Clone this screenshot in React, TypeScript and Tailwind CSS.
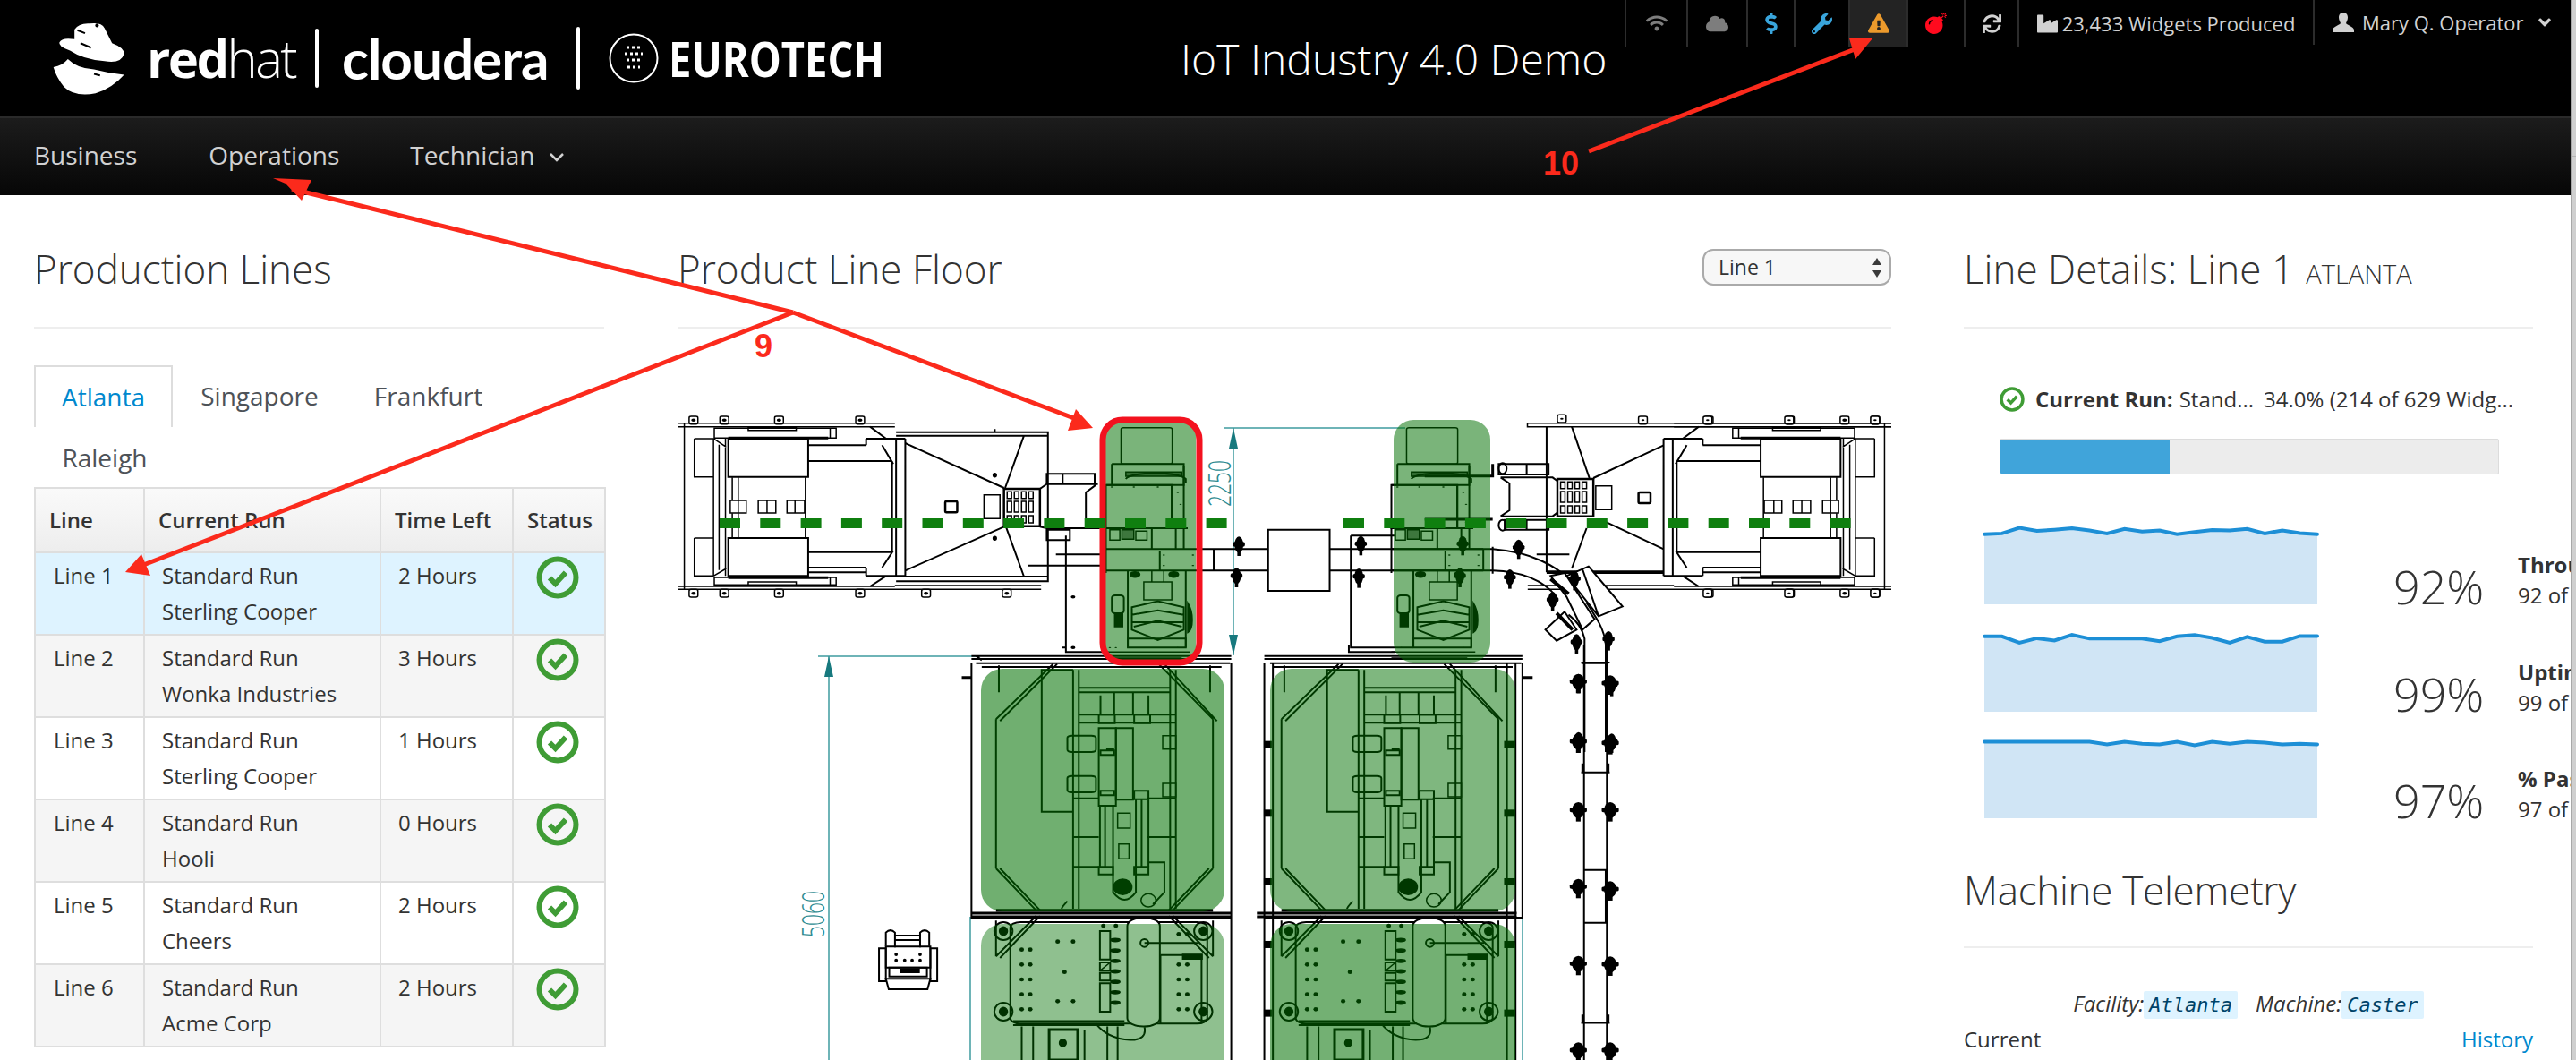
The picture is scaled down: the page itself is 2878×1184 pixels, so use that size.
import React from 'react';
import { FaWifi, FaCloud, FaDollarSign, FaWrench, FaExclamationTriangle, FaBomb, FaSync, FaIndustry, FaAngleDown } from 'react-icons/fa';

const Z4 = 'translate(740 440) scale(0.4464 0.3333)';
const Z5 = 'translate(1440 440) scale(0.4464 0.3333)';
const Z6 = 'translate(880 720) scale(0.6378 0.3333)';

function StatusIcon({ size = 48 }: { size?: number }) {
  return (
    <svg width={size} height={size} viewBox="0 0 48 48" className="block">
      <circle cx="24" cy="24" r="20.5" fill="none" stroke="#3f9c35" strokeWidth="6" />
      <path d="M15 24.5l6.5 6.5L33 18.5" fill="none" stroke="#3f9c35" strokeWidth="6" />
    </svg>
  );
}

function Tab({ x, y }: { x: number; y: number }) {
  return (
    <g>
      <rect x={x - 11} y={y} width="22" height="26" rx="5" fill="#fff" stroke="#000" strokeWidth="1.5" />
      <ellipse cx={x} cy={y + 13} rx="4" ry="3" fill="#000" />
    </g>
  );
}

function BackUnit() {
  return (
    <g fill="none" stroke="#000" strokeWidth="1.5">
      <path d="M36 98H582M36 110H582M36 645H582M36 655H948M582 642H948M55 98V655" />
      <path d="M80 150H128M80 150V278H128M80 483H128M80 483V610H128M128 150V610M142 170V590M158 150V610M128 150L160 178M128 610L160 585" />
      <path d="M130 115H435V148H130ZM130 615H435V640H130ZM215 112H335V122H215ZM215 630H335V640H215ZM420 115V148M420 615V640" />
      <path d="M165 148H415M165 616H415" strokeWidth="3" />
      <rect x="165" y="152" width="200" height="126" strokeWidth="2" />
      <rect x="165" y="483" width="200" height="127" strokeWidth="2" />
      <path d="M175 280V357M190 280V357M175 400V483M190 400V483M358 280V483" />
      <rect x="170" y="357" width="40" height="42" />
      <path d="M190 357V399" />
      <rect x="240" y="357" width="44" height="42" />
      <path d="M262 357V399" />
      <rect x="312" y="357" width="44" height="42" />
      <path d="M332 357V399" />
      <path d="M365 225H575M365 172H510M365 530H575M365 582H510M575 225V530M585 150V610M608 150V610M510 150H608M510 610H608M550 172L578 235M550 582L578 525M365 598H510M510 150V172M510 582V610M520 110L560 150M520 645L560 610" strokeWidth="2" />
      {[78, 155, 292, 495].map((x) => <Tab key={x} x={x} y={75} />)}
      {[78, 155, 292, 495].map((x) => <Tab key={x} x={x} y={655} />)}
    </g>
  );
}

function Grid({ x, y }: { x: number; y: number }) {
  const xs = [8, 26, 44, 62];
  return (
    <g transform={`translate(${x} ${y})`} fill="none" stroke="#000" strokeWidth="1.5">
      <rect x="0" y="0" width="90" height="125" strokeWidth="2.5" />
      {xs.map((c) => (
        <g key={c}>
          <rect x={c} y="10" width="11" height="22" />
          <rect x={c} y="42" width="11" height="36" />
          <rect x={c} y="90" width="11" height="24" />
        </g>
      ))}
    </g>
  );
}

function Fastener({ x, y }: { x: number; y: number }) {
  return (
    <g fill="#000">
      <ellipse cx={x} cy={y} rx="11" ry="27" />
      <rect x={x - 15} y={y - 9} width="30" height="16" rx="5" />
      <rect x={x - 4} y={y + 20} width="8" height="18" />
    </g>
  );
}

function Caster() {
  const dots = [[1125, 312], [1180, 312], [1240, 312], [1290, 330], [1297, 370], [1297, 430], [1120, 850], [1135, 850], [1290, 850], [1255, 540], [1255, 575], [1328, 540], [1328, 575]];
  return (
    <g fill="none" stroke="#000" strokeWidth="1.5">
      <rect x="1148" y="113" width="128" height="122" rx="6" />
      <path d="M1125 235H1305V305H1110M1125 235V305M1160 285C1170 260 1290 258 1310 285V300" strokeWidth="2" />
      <rect x="1160" y="262" width="140" height="14" fill="#000" fillOpacity="0.6" />
      <rect x="1110" y="305" width="165" height="145" strokeWidth="2" />
      <path d="M1275 305V450M1305 240V520M1110 450H1315M1110 520H1340M1110 592H1340M1110 450V600M1245 525V590M1340 520V592M1165 592V850M1310 592V850M1225 450V520M1285 450V520" strokeWidth="2" />
      <rect x="1120" y="455" width="25" height="35" />
      <rect x="1150" y="455" width="30" height="32" fill="#000" fillOpacity="0.5" />
      <rect x="1185" y="460" width="28" height="30" />
      <path d="M1205 630H1275V690H1205ZM1225 592V630M1255 592V630" strokeWidth="1.5" />
      <path d="M1175 715L1240 695L1305 715V790L1240 825L1175 790ZM1175 740L1240 725L1305 740M1175 765H1305M1180 780L1240 760L1300 780" strokeWidth="2" />
      <rect x="1125" y="675" width="30" height="60" rx="8" strokeWidth="2" />
      <rect x="1132" y="735" width="20" height="45" fill="#000" />
      <rect x="1165" y="820" width="145" height="30" strokeWidth="2" />
      <path d="M1315 700V800C1330 790 1330 730 1315 700Z" fill="#000" />
      <path d="M1110 865H1320M1110 885H1300" />
      {dots.map(([x, y]) => <ellipse key={x + '-' + y} cx={x} cy={y} rx="3" ry="2" fill="#000" stroke="none" />)}
      <ellipse cx="1183" cy="605" rx="12" ry="9" fill="#000" />
      <ellipse cx="1280" cy="605" rx="12" ry="9" fill="#000" />
    </g>
  );
}

function UpperModule() {
  return (
    <g fill="none" stroke="#000" strokeWidth="1.5">
      <path d="M365 250L465 65M372 256L472 65M650 65L745 250M660 65L752 256M365 250V750M745 250V750M365 750L435 890M372 750L442 890M745 750L675 890M738 750L668 890" strokeWidth="2" />
      <path d="M500 85H445V560H500M500 85V885M680 85V885M510 85V885M670 85V885M510 145H670M510 160H670M510 235H680M510 262H680M500 645H545M630 645H680M500 515H545M630 515H680M500 745H545" strokeWidth="2" />
      <rect x="545" y="235" width="28" height="28" strokeWidth="2" />
      <rect x="607" y="235" width="28" height="28" strokeWidth="2" />
      <rect x="545" y="280" width="30" height="260" strokeWidth="2" />
      <rect x="575" y="280" width="30" height="240" strokeWidth="2" />
      <rect x="607" y="490" width="25" height="28" strokeWidth="2" />
      <path d="M548 170V235M572 160V235M605 160V235M632 170V235M558 350H572M548 355H572V370H548ZM548 490H572V505H548Z" strokeWidth="2" />
      <rect x="490" y="305" width="50" height="55" rx="8" strokeWidth="2" />
      <rect x="490" y="440" width="50" height="55" rx="8" strokeWidth="2" />
      <rect x="657" y="305" width="23" height="45" strokeWidth="1.5" />
      <rect x="657" y="465" width="23" height="45" strokeWidth="1.5" />
      <rect x="578" y="565" width="22" height="50" />
      <rect x="580" y="668" width="18" height="50" />
      <path d="M547 540V745M556 540V745M570 540V830Q590 880 610 830V520M620 520V745M632 520V745" strokeWidth="2" />
      <rect x="545" y="745" width="25" height="25" strokeWidth="2" />
      <rect x="607" y="745" width="25" height="25" strokeWidth="2" />
      <path d="M632 730H660V830L640 870" strokeWidth="2" />
      <ellipse cx="587" cy="812" rx="16" ry="26" fill="#000" />
      <ellipse cx="587" cy="812" rx="6" ry="10" fill="none" />
      <ellipse cx="632" cy="857" rx="13" ry="22" />
      <path d="M365 890H745M322 900H777M322 912H777" strokeWidth="3" />
      <path d="M490 860Q480 880 480 885M370 70V160M740 70V160" strokeWidth="2" />
    </g>
  );
}

function LowerModule() {
  const dots: number[][] = [];
  [[410, 1022], [425, 1022], [410, 1072], [425, 1072], [410, 1122], [425, 1122], [410, 1172], [425, 1172], [410, 1222], [425, 1222], [685, 970], [700, 970], [685, 1072], [700, 1072], [685, 1122], [700, 1122], [685, 1172], [700, 1172], [685, 1222], [700, 1222], [485, 1097], [473, 995], [500, 995], [473, 1195], [500, 1195], [553, 942], [575, 942]].forEach((d) => dots.push(d));
  return (
    <g fill="none" stroke="#000" strokeWidth="1.5">
      <rect x="390" y="930" width="345" height="340" rx="18" strokeWidth="2" />
      <rect x="595" y="915" width="57" height="365" rx="28" fill="#fff" strokeWidth="2" />
      {[[378, 960], [728, 960], [378, 1230], [728, 1230]].map(([x, y]) => (
        <g key={x + '-' + y}>
          <ellipse cx={x} cy={y} rx="16" ry="30" strokeWidth="2" />
          <ellipse cx={x} cy={y} rx="7" ry="14" fill="#000" />
        </g>
      ))}
      <rect x="547" y="960" width="18" height="95" strokeWidth="2" />
      <rect x="547" y="1065" width="18" height="28" strokeWidth="2" />
      <path d="M547 1093L565 1065" />
      <rect x="547" y="1100" width="18" height="26" strokeWidth="2" />
      <rect x="547" y="1135" width="18" height="95" strokeWidth="2" />
      {[990, 1025, 1060, 1095, 1130, 1165, 1200].map((y) => <ellipse key={y} cx="574" cy={y} rx="8" ry="5" fill="#000" />)}
      <path d="M625 1000H720M653 1040H725V1270M653 1040V1270" strokeWidth="2" />
      <ellipse cx="625" cy="1000" rx="7" ry="13" strokeWidth="2" />
      <rect x="692" y="1038" width="34" height="16" fill="#000" />
      <path d="M365 1045L435 910M372 1050L442 910M745 1045L675 910M738 1050L668 910M365 1045V925M745 1045V925" strokeWidth="2" />
      <path d="M395 1275H590M395 1262H590M410 1280V1392M430 1280V1392M520 1290V1392M560 1280V1392M578 1280V1392M540 1270Q560 1320 600 1325Q630 1325 625 1282" strokeWidth="2" />
      <rect x="458" y="1290" width="50" height="102" strokeWidth="3" />
      <ellipse cx="482" cy="1335" rx="6" ry="12" fill="#000" />
      {dots.map(([x, y]) => <ellipse key={x + '-' + y} cx={x} cy={y} rx="4" ry="7" fill="#000" stroke="none" />)}
    </g>
  );
}

function FloorPlan() {
  const leftDash = Array.from({ length: 13 }, (_, i) => 804 + i * 45.3);
  const rightDash = Array.from({ length: 13 }, (_, i) => 1501 + i * 45.3);
  const tabs5 = [[683, 70], [886, 75], [1048, 75], [1252, 75], [1467, 75], [1048, 655], [1252, 655], [1467, 655]];
  return (
    <svg width="1356" height="744" viewBox="757 440 1356 744" className="block [&_*]:[vector-effect:non-scaling-stroke]">
      <g stroke="#3f9ca0" strokeWidth="1.5" fill="none">
        <path d="M1367 478H1570M1378 478V732M914 733H1095M926 733V1184M1084 1024V1184M1701 1024V1184" />
      </g>
      <path d="M1378 478l-5 23h10zM1378 732l-5-23h10zM926 733l-5 23h10z" fill="#17797e" />
      <text x="1375" y="540" transform="rotate(-90 1375 540)" textAnchor="middle" textLength="52" lengthAdjust="spacingAndGlyphs" fontSize="34" fontWeight="300" fill="#2c8a90" fontFamily="'Open Sans', sans-serif">2250</text>
      <text x="921" y="1021" transform="rotate(-90 921 1021)" textAnchor="middle" textLength="52" lengthAdjust="spacingAndGlyphs" fontSize="34" fontWeight="300" fill="#2c8a90" fontFamily="'Open Sans', sans-serif">5060</text>

      <g transform={Z4}>
        <BackUnit />
        <g fill="none" stroke="#000" strokeWidth="1.5">
          <path d="M585 128H965V140H585M965 128V628M585 612H965V628H585M608 165L855 315M608 592L855 445M905 140L858 315M860 445L905 612M832 118V128" strokeWidth="2" />
          <rect x="805" y="338" width="40" height="80" />
          <rect x="708" y="360" width="30" height="37" rx="3" strokeWidth="2.5" />
          <path d="M945 318L962 302H1090M945 445L962 450H1095M1085 305L1060 330V425L1095 430M962 268H1082V302H962ZM1002 268V302M962 455H1020V490H962Z" strokeWidth="2" />
          <path d="M1010 475V865H1100M1010 865V850H1000M1100 538H985M1100 575H915" strokeWidth="2" />
          <ellipse cx="1028" cy="680" rx="4" ry="3" fill="#000" />
          <ellipse cx="1028" cy="850" rx="4" ry="3" fill="#000" />
          <path d="M1340 520H1515M1340 592H1515M1380 522V590" strokeWidth="2" />
          <ellipse cx="832" cy="272" rx="4" ry="6" fill="#000" />
          <ellipse cx="832" cy="484" rx="4" ry="6" fill="#000" />
          <Tab x={660} y={655} />
          <Tab x={862} y={655} />
        </g>
        <Grid x={855} y={318} />
        <Caster />
        <Fastener x={1443} y={505} />
        <Fastener x={1437} y={610} />
      </g>
      <g transform="translate(319 0)">
        <g transform={Z4}>
          <Caster />
        </g>
      </g>

      <g transform="translate(2870 0) scale(-1 1)">
        <g transform={Z4}>
          <BackUnit />
        </g>
      </g>
      <g transform={Z5}>
        <g fill="none" stroke="#000" strokeWidth="1.5">
          <rect x="597" y="98" width="913" height="12" />
          <path d="M645 110V595H938M645 600H938M708 110L752 282M708 585L745 450M938 172L762 282M938 520L795 430" strokeWidth="2" />
          <rect x="768" y="308" width="40" height="80" />
          <rect x="875" y="330" width="30" height="36" rx="3" strokeWidth="2.5" />
          <path d="M530 280H660L672 292M530 410H660L672 398M530 280L552 300V390L530 410M525 235H650V270H525ZM595 235V270M540 422H650V455H540ZM595 422V455" strokeWidth="2" />
          <ellipse cx="535" cy="250" rx="10" ry="18" strokeWidth="2" />
          <ellipse cx="535" cy="440" rx="10" ry="18" strokeWidth="2" />
          <path d="M510 235V275H340M510 420H340" strokeWidth="3" />
          <path d="M155 475V850H310M155 475H265M150 840V865H265" strokeWidth="2" />
          <rect x="-52" y="455" width="154" height="205" strokeWidth="2" />
          <path d="M102 520H510M102 592H510M510 512V602" strokeWidth="2" />
          <path d="M510 520C610 530 670 580 700 620M510 592C590 595 640 630 670 680M740 900V820C735 790 720 760 700 740M793 900V840C790 790 770 750 745 700M732 902H800M740 900V1200M793 900V1200M620 538H702" strokeWidth="2" />
          <path d="M750 578L835 712L775 745L695 610ZM735 588L775 745M655 610L690 600L765 755L735 790L695 680ZM690 730L720 790L670 827L642 790Z" fill="#fff" strokeWidth="2" />
          <path d="M655 620L700 670M670 735L710 790" strokeWidth="4" />
        </g>
        <Grid x={672} y={285} />
        {tabs5.map(([x, y]) => <Tab key={x + '-' + y} x={x} y={y} />)}
        {[[180, 503], [175, 612], [435, 503], [428, 610], [575, 515], [553, 615], [660, 690], [715, 620], [720, 832], [800, 822], [725, 965], [808, 975], [725, 1160], [808, 1165]].map(([x, y]) => <Fastener key={x + '-' + y} x={x} y={y} />)}
      </g>

      <g transform={Z6}>
        <g fill="none" stroke="#000" strokeWidth="1.5">
          <path d="M322 38H777M322 48H777M322 62V915H777M777 62V1392M340 52L330 38M330 62H775M340 75H760" strokeWidth="2" />
          <path d="M835 38H1287M835 48H1287M835 62V1392M850 62V1392M1287 62V915H835M1275 62V1392M1260 62V1392M845 62H1285M850 75H1270" strokeWidth="2" />
          <path d="M305 110H322M1287 110H1305" strokeWidth="3" />
        </g>
        <UpperModule />
        <LowerModule />
        <g transform="translate(500 0)">
          <UpperModule />
          <LowerModule />
        </g>
        {[335, 565, 795, 1005, 1235].map((y) => <rect key={y} x="834" y={y - 12} width="14" height="24" fill="#000" />)}
        {[335, 565, 795, 1005, 1235].map((y) => <rect key={y} x="1255" y={y - 12} width="20" height="24" fill="#000" />)}
        <g fill="none" stroke="#000" strokeWidth="1.5">
          <path d="M1395 0V1392M1435 0V1392M1390 60H1440M1390 428H1440M1390 1268H1440M1395 755H1433V932H1395M1392 398V428M1438 398V428M1392 1240V1268M1438 1240V1268" strokeWidth="2" />
        </g>
        {[[1385, 125], [1441, 130], [1385, 325], [1441, 330], [1385, 555], [1441, 555], [1385, 812], [1441, 820], [1385, 1070], [1441, 1072], [1385, 1360], [1441, 1360]].map(([x, y]) => <Fastener key={x + '-' + y} x={x} y={y} />)}
        <g fill="none" stroke="#000" strokeWidth="2">
          <path d="M172 1010V965Q180 950 188 965V1015M232 1015V965Q240 950 248 965V1010M188 990H232M188 975H232" />
          <rect x="160" y="1018" width="12" height="110" />
          <rect x="250" y="1018" width="12" height="110" />
          <rect x="172" y="1012" width="78" height="70" />
          <rect x="178" y="1082" width="66" height="30" />
          <path d="M172 1120H250L245 1155H177Z" />
          <rect x="198" y="1088" width="32" height="10" fill="#000" />
          {[190, 205, 218, 232].map((x) => <ellipse key={x} cx={x} cy="1058" rx="3" ry="6" fill="#000" stroke="none" />)}
          {[190, 232].map((x) => <ellipse key={x} cx={x} cy="1038" rx="3" ry="6" fill="#000" stroke="none" />)}
        </g>
      </g>

      <rect x="1096" y="747" width="272" height="271" rx="24" fill="#007000" fillOpacity="0.56" />
      <rect x="1096" y="1032" width="272" height="200" rx="24" fill="#007000" fillOpacity="0.44" />
      <rect x="1419" y="747" width="274" height="271" rx="24" fill="#007000" fillOpacity="0.5" />
      <rect x="1419" y="1032" width="274" height="200" rx="24" fill="#007000" fillOpacity="0.55" />
      <rect x="1557" y="469" width="108" height="271" rx="22" fill="#007000" fillOpacity="0.52" />
      <rect x="1235" y="472" width="101" height="265" rx="14" fill="#007000" fillOpacity="0.52" />
      <rect x="1232" y="469" width="108" height="271" rx="22" fill="none" stroke="#f3121f" strokeWidth="7" />
      {leftDash.map((x) => <rect key={x} x={x} y="579" width="23" height="11" fill="#0f7f0f" />)}
      {rightDash.map((x) => <rect key={x} x={x} y="579" width="23" height="11" fill="#0f7f0f" />)}
    </svg>
  );
}

function Heading({ children, right }: { children: React.ReactNode; right?: React.ReactNode }) {
  return (
    <div className="h-[149px] pt-[55px] border-b-2 border-[#eeeeee] flex justify-between items-start">
      <h2 className="text-[44px] leading-[54px] font-light text-[#333] whitespace-nowrap">{children}</h2>
      {right}
    </div>
  );
}

const rows = [
  ['Line 1', 'Sterling Cooper', '2 Hours'],
  ['Line 2', 'Wonka Industries', '3 Hours'],
  ['Line 3', 'Sterling Cooper', '1 Hours'],
  ['Line 4', 'Hooli', '0 Hours'],
  ['Line 5', 'Cheers', '2 Hours'],
  ['Line 6', 'Acme Corp', '2 Hours'],
];

const sparks = [
  { z: [799, 797, 782, 790, 787, 783, 789, 797, 785, 792, 789, 799, 793, 788, 789, 785, 797, 789, 796, 799], b: 985, pct: '92%', t: 'Throughput', s: '92 of 100 Widgets' },
  { z: [1071, 1071, 1088, 1076, 1082, 1067, 1077, 1076, 1077, 1077, 1084, 1071, 1067, 1075, 1088, 1072, 1085, 1085, 1070, 1070], b: 1271, pct: '99%', t: 'Uptime', s: '99 of 100 Minutes' },
  { z: [1352, 1352, 1352, 1352, 1352, 1352, 1352, 1359, 1352, 1357, 1359, 1352, 1361, 1352, 1357, 1352, 1354, 1359, 1357, 1359], b: 1555, pct: '97%', t: '% Passed', s: '97 of 100 Widgets' },
];

function Spark({ z, b }: { z: number[]; b: number }) {
  const pts = z.map((v, i) => [2 + (i * 372) / 19, 115 + (v - b) / 2.376]);
  const line = pts.map((p) => p.join(',')).join(' ');
  return (
    <svg width="376" height="115" className="block flex-none">
      <polygon points={`2,115 ${line} 374,115`} fill="#d0e5f5" />
      <polyline points={line} fill="none" stroke="#1d8fd6" strokeWidth="4" strokeLinecap="round" />
    </svg>
  );
}

function UtilCell({ w, active, children }: { w: string; active?: boolean; children: React.ReactNode }) {
  return (
    <div className={`${w} ${active ? 'bg-[#232323]' : ''} h-[52px] border-l-2 border-[#2c2c2c] flex items-center justify-center flex-none`}>
      {children}
    </div>
  );
}

function Logos() {
  return (
    <div className="flex items-center h-[130px] pl-[58px] text-white flex-none w-[1260px]">
      <svg width="84" height="84" viewBox="25 20 250 250" className="flex-none">
        <path d="M100 50Q115 28 150 30Q190 25 200 45L225 95Q265 110 265 130Q255 165 200 155Q130 150 85 120Q45 105 50 92Q60 75 100 82Z" fill="#fff" />
        <path d="M30 175Q60 170 78 148Q110 180 165 182Q215 195 265 200Q225 245 170 262Q100 275 65 240Q40 210 30 175Z" fill="#fff" />
        <path d="M110 52L135 62M120 95L155 110M165 197L185 202" stroke="#000" strokeWidth="6" fill="none" />
        <circle cx="175" cy="36" r="6" fill="#000" />
      </svg>
      <div className="ml-[22px] text-[58px] leading-none tracking-[-2.6px] flex-none w-[171px]">
        <span className="font-bold">red</span><span className="font-light">hat</span>
      </div>
      <div className="ml-[17px] w-[4px] h-[66px] bg-white rounded-full flex-none" />
      <div className="ml-[26px] text-[62px] leading-none font-bold tracking-[-1px] [font-family:Lato,sans-serif] w-[237px] flex-none whitespace-nowrap">cloudera</div>
      <div className="ml-[25px] w-[4px] h-[70px] bg-white rounded-full flex-none" />
      <svg width="56" height="56" viewBox="0 0 56 56" className="ml-[32px] flex-none">
        <circle cx="28" cy="28" r="26.5" fill="none" stroke="#fff" strokeWidth="2" />
        <path d="M20 16H36M18 23H38M20 30H36M21 38H35" stroke="#fff" strokeWidth="3" strokeDasharray="3 3" fill="none" />
      </svg>
      <div className="ml-[11px] text-[54px] leading-none font-bold scale-x-[0.84] origin-left flex-none">EUROTECH</div>
    </div>
  );
}

function Annotations() {
  return (
    <svg width="2878" height="1184" className="absolute left-0 top-0 pointer-events-none">
      <g stroke="#fb2a1c" strokeWidth="5" fill="none">
        <path d="M886 349L326 211" />
        <path d="M886 349L150 635" />
        <path d="M886 349L1205 469" />
        <path d="M1775 169L2080 52" />
      </g>
      <g fill="#fb2a1c">
        <path d="M319 205L337 224L348 201L305 199Z" />
        <path d="M140 639L158 619L168 643Z" />
        <path d="M1221 478L1202 457L1193 481Z" />
        <path d="M2092 43L2066 43L2073 66Z" />
      </g>
      <text x="843" y="399" fill="#fb2a1c" fontSize="36" fontWeight="700" fontFamily="'Liberation Sans', sans-serif">9</text>
      <text x="1724" y="195" fill="#fb2a1c" fontSize="36" fontWeight="700" fontFamily="'Liberation Sans', sans-serif">10</text>
    </svg>
  );
}

export default function App() {
  return (
    <div className="relative flex w-[2878px] h-[1184px] overflow-hidden bg-white [font-family:'Open_Sans',sans-serif] text-[#333]">
      <div className="flex flex-col w-[2872px] flex-none">
        <header className="h-[130px] bg-black flex items-start flex-none">
          <Logos />
          <div className="mt-[35px] ml-[59px] w-[490px] text-[48px] leading-[62px] font-light text-white whitespace-nowrap">IoT Industry 4.0 Demo</div>
          <div className="ml-[6px] w-[1056px] flex text-[#d1d1d1] text-[22px] flex-none">
            <UtilCell w="w-[69px]"><FaWifi size={24} color="#7d7d7d" /></UtilCell>
            <UtilCell w="w-[67px]"><FaCloud size={25} color="#7d7d7d" /></UtilCell>
            <UtilCell w="w-[53px]"><FaDollarSign size={24} color="#39a5dc" /></UtilCell>
            <UtilCell w="w-[61px]"><FaWrench size={23} color="#39a5dc" /></UtilCell>
            <UtilCell w="w-[65px]" active><FaExclamationTriangle size={24} color="#ec9a2c" /></UtilCell>
            <UtilCell w="w-[64px]"><FaBomb size={24} color="#ff0a1e" /></UtilCell>
            <UtilCell w="w-[60px]"><FaSync size={21} color="#d1d1d1" /></UtilCell>
            <UtilCell w="w-[330px]">
              <FaIndustry size={23} color="#d1d1d1" className="mr-[5px] flex-none" />
              <span className="whitespace-nowrap">23,433 Widgets Produced</span>
            </UtilCell>
            <div className="w-[287px] h-[50px] border-l-2 border-[#2c2c2c] flex items-center pl-[20px] flex-none">
              <svg width="24" height="22" viewBox="0 0 24 22" className="mr-[9px] flex-none">
                <path d="M12 0c3.500 0 5 2.500 5 5.500 0 3-1.500 5-2 6.500 0 1.500 9 4 9 7.500v2.500H0v-2.500C0 16 9 13.500 9 12c-.5-1.500-2-3.500-2-6.500C7 2.500 8.500 0 12 0z" fill="#d1d1d1" />
              </svg>
              <span className="whitespace-nowrap">Mary Q. Operator</span>
              <FaAngleDown size={22} className="ml-[12px]" />
            </div>
          </div>
        </header>
        <nav className="h-[88px] flex-none border-t-2 border-[#2a2a2a] bg-linear-to-b from-[#1c1c1c] to-[#070707] flex items-center text-[28px] text-[#d1d1d1] pl-[38px] pb-[4px]">
          <span>Business</span>
          <span className="ml-[80px]">Operations</span>
          <span className="ml-[79px]">Technician</span>
          <svg width="18" height="10" viewBox="0 0 18 10" className="ml-[15px] mt-[6px]"><path d="M2 1l7 7 7-7" stroke="#d1d1d1" strokeWidth="2.5" fill="none" /></svg>
        </nav>
        <main className="flex pl-[38px] flex-1 min-h-0 overflow-hidden">
          <section className="w-[637px] flex-none">
            <Heading>Production Lines</Heading>
            <div className="mt-[41px] flex flex-wrap text-[28px] h-[136px] content-start text-[#4d5258]">
              <div className="w-[155px] h-[69px] border-2 border-b-0 border-[#dddddd] flex items-center justify-center text-[#0088ce] pb-[2px]">Atlanta</div>
              <div className="w-[194px] h-[69px] flex items-center justify-center pb-[2px]">Singapore</div>
              <div className="w-[183px] h-[69px] flex items-center justify-center pb-[2px]">Frankfurt</div>
              <div className="w-[158px] h-[67px] flex items-center justify-center">Raleigh</div>
            </div>
            <table className="w-[637px] table-fixed border-collapse text-[24px] leading-[40px]">
              <colgroup>
                <col className="w-[122px]" />
                <col className="w-[264px]" />
                <col className="w-[148px]" />
                <col className="w-[103px]" />
              </colgroup>
              <thead>
                <tr className="h-[72px] bg-linear-to-b from-[#fafafa] to-[#ededed] text-left">
                  {['Line', 'Current Run', 'Time Left', 'Status'].map((h) => (
                    <th key={h} className="border-2 border-[#dedede] pl-[15px] font-semibold whitespace-nowrap">{h}</th>
                  ))}
                </tr>
              </thead>
              <tbody>
                {rows.map((r, i) => (
                  <tr key={r[0]} className={`h-[92px] ${i === 0 ? 'bg-[#def3ff]' : i % 2 === 1 ? 'bg-[#f5f5f5]' : 'bg-white'}`}>
                    <td className="border-2 border-[#dedede] align-top pl-[20px] py-[5px]">{r[0]}</td>
                    <td className="border-2 border-[#dedede] align-top pl-[19px] py-[5px]"><div>Standard Run</div><div>{r[1]}</div></td>
                    <td className="border-2 border-[#dedede] align-top pl-[19px] py-[5px]">{r[2]}</td>
                    <td className="border-2 border-[#dedede] align-top pl-[25px] py-[3px]"><StatusIcon /></td>
                  </tr>
                ))}
              </tbody>
            </table>
          </section>

          <section className="w-[1356px] flex-none ml-[82px]">
            <Heading
              right={
                <div className="mt-[5px] w-[211px] h-[41px] rounded-[12px] border-2 border-[#aaaaaa] bg-[#f7f7f7] flex items-center justify-between pl-[16px] pr-[8px] text-[23px]">
                  <span>Line 1</span>
                  <svg width="12" height="22" viewBox="0 0 12 22"><path d="M6 0l5 8H1zM6 22l-5-8h10z" fill="#3a3a3a" /></svg>
                </div>
              }
            >
              Product Line Floor
            </Heading>
            <div className="mt-[73px]"><FloorPlan /></div>
          </section>

          <section className="w-[636px] flex-none ml-[81px]">
            <Heading>
              Line Details: Line 1 <span className="text-[29px] font-light uppercase ml-[2px]">Atlanta</span>
            </Heading>
            <div className="mt-[59px] pl-[40px] flex items-center text-[24px] leading-[40px] whitespace-nowrap">
              <StatusIcon size={28} />
              <span className="ml-[12px] font-bold">Current Run:</span>
              <span className="ml-[7px]">Stand...</span>
              <span className="ml-[11px]">34.0% (214 of 629 Widg...</span>
            </div>
            <div className="mt-[24px] ml-[40px] w-[558px] h-[40px] bg-[#ececec] border border-[#dcdcdc] rounded-[2px] overflow-hidden">
              <div className="w-[34%] h-full bg-[#40a4da]" />
            </div>
            <div className="mt-[30px] ml-[21px]">
              {sparks.map((s) => (
                <div key={s.pct} className="flex h-[119.5px] w-[700px]">
                  <Spark z={s.z} b={s.b} />
                  <div className="ml-[83px] mt-[65px] text-[52px] leading-[60px] font-light w-[139px] flex-none">{s.pct}</div>
                  <div className="mt-[54px] text-[24px] leading-[34px] whitespace-nowrap">
                    <div className="font-bold">{s.t}</div>
                    <div>{s.s}</div>
                  </div>
                </div>
              ))}
            </div>
            <div className="h-[141px] pt-[49px] border-b-2 border-[#eeeeee] mt-[-1px]">
              <h2 className="text-[44px] leading-[54px] font-light tracking-[-0.3px]">Machine Telemetry</h2>
            </div>
            <div className="mt-[42px] text-center text-[24px] leading-[40px] whitespace-nowrap">
              <i>Facility:</i>
              <code className="bg-[#def3ff] text-[#004368] italic px-[6px] py-[3px] rounded-[2px] [font-family:'DejaVu_Sans_Mono',monospace] text-[22px]">Atlanta</code>
              <i className="ml-[20px]">Machine:</i>
              <code className="bg-[#def3ff] text-[#004368] italic px-[6px] py-[3px] rounded-[2px] [font-family:'DejaVu_Sans_Mono',monospace] text-[22px]">Caster</code>
            </div>
            <div className="mt-[-2px] flex justify-between text-[24px] leading-[40px]">
              <span>Current</span>
              <span className="text-[#0088ce]">History</span>
            </div>
          </section>
        </main>
      </div>
      <div className="w-[6px] flex-none border-l-2 border-[#a8a8a8] bg-[#cfcfcf] flex flex-col">
        <div className="h-[175px] border-b border-[#b5b5b5]" />
        <div className="h-[88px] border-b border-[#b5b5b5]" />
      </div>
      <Annotations />
    </div>
  );
}
